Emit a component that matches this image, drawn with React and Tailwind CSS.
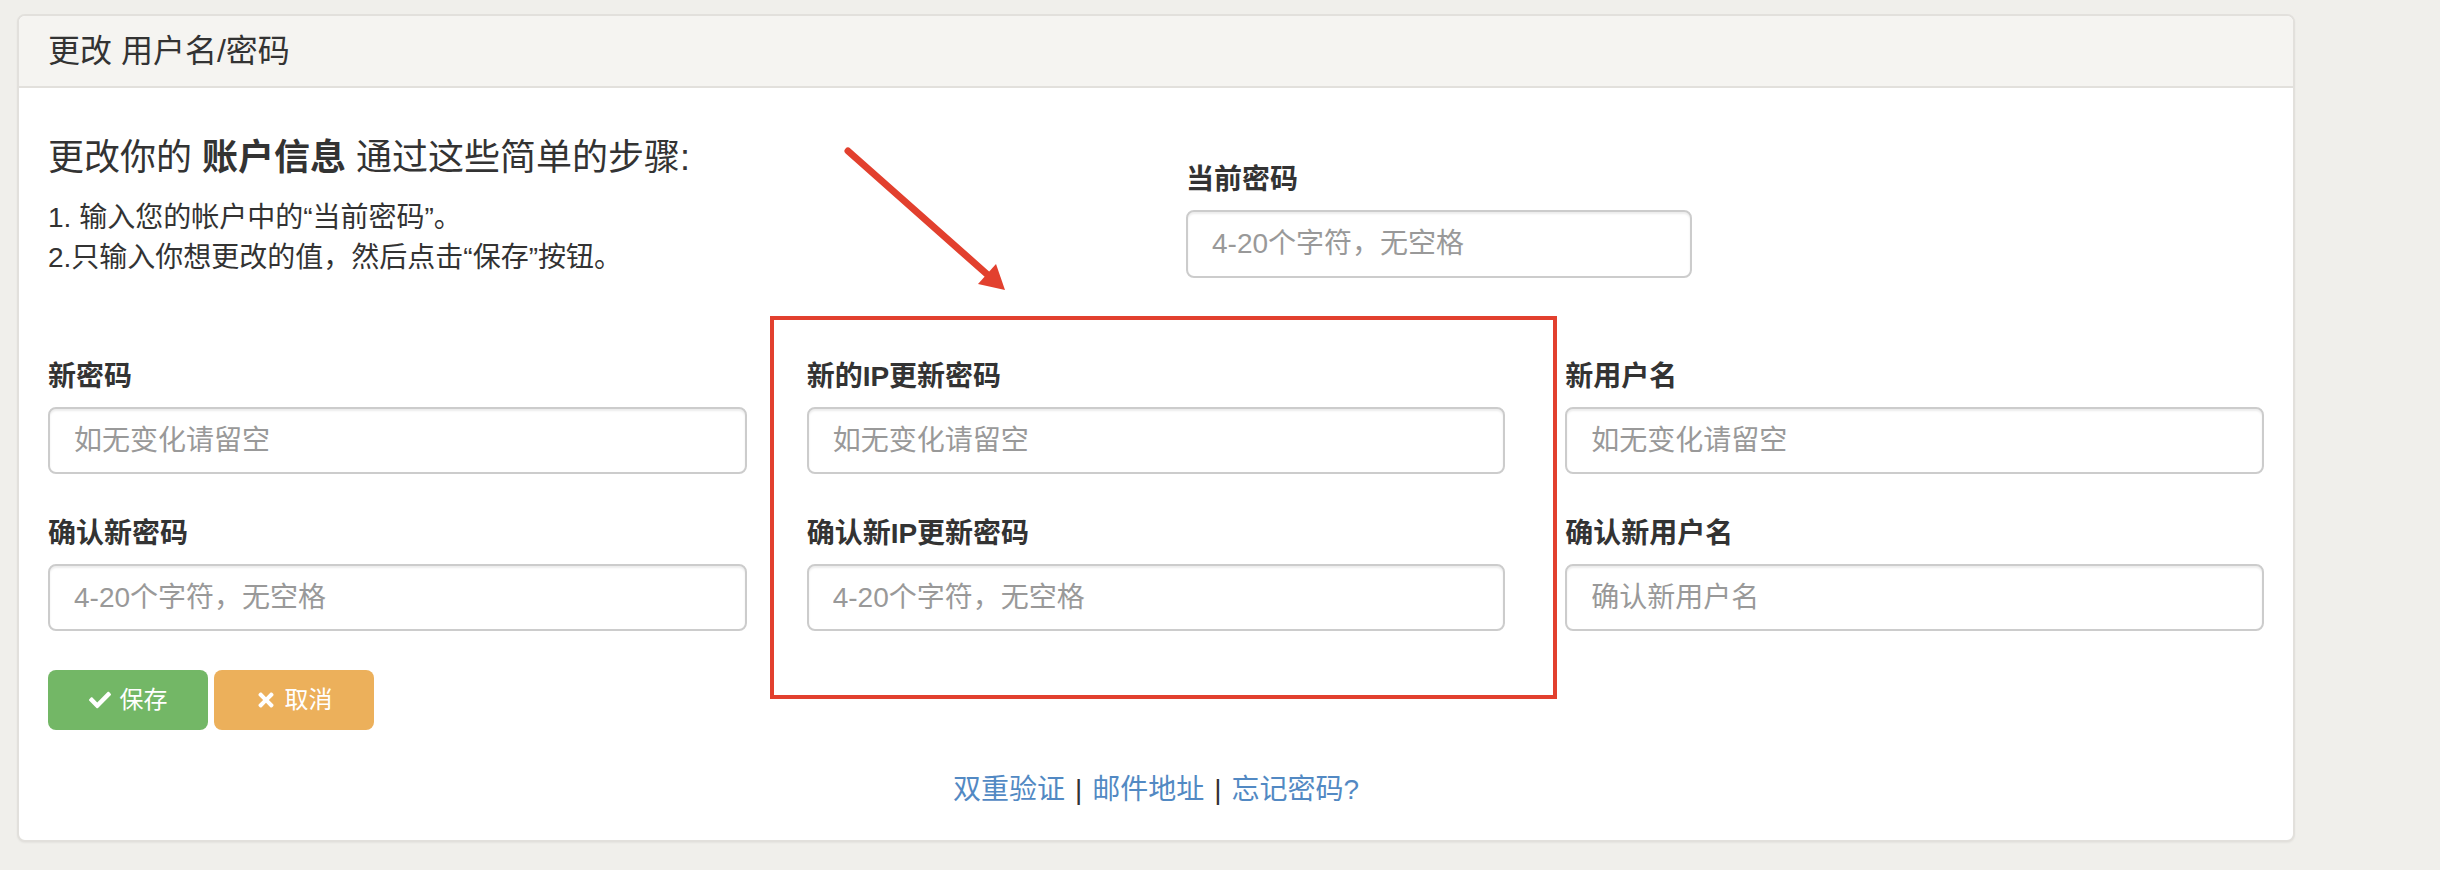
import React from "react";
import { FaCheck, FaTimes } from "react-icons/fa";

const FONT = "font-['Liberation_Sans','Noto_Sans_CJK_SC',sans-serif]";

function Field({ label, placeholder, className = "" }) {
  return (
    <div className={className}>
      <label className="block text-[28px] leading-[40px] font-bold text-[#333]">
        {label}
      </label>
      <input
        type="text"
        placeholder={placeholder}
        className="mt-[10px] block w-full h-[67px] px-[24px] text-[28px] text-[#555] bg-white border-2 border-[#cccccc] rounded-[8px] shadow-[inset_0_2px_2px_rgba(0,0,0,0.075)] placeholder:text-[#999] outline-none"
      />
    </div>
  );
}

export default function App() {
  return (
    <div className={`min-h-screen bg-[#f0efeb] pt-[14px] pl-[17px] ${FONT}`}>
      <div className="w-[2278px] bg-white border-2 border-[#e2e0dc] rounded-[8px] shadow-[0_1px_2px_rgba(0,0,0,0.05)]">
        {/* Heading */}
        <div className="h-[72px] flex items-center px-[29px] bg-[#f5f4f1] border-b-2 border-[#e2e0dc] rounded-t-[6px]">
          <h3 className="text-[32px] text-[#333]">更改 用户名/密码</h3>
        </div>

        {/* Body */}
        <div className="relative px-[29px] pt-[30px] pb-[30px] text-[#333]">
          <div className="grid grid-cols-2 gap-x-[60px]">
            <div>
              <h4 className="mt-[20px] mb-[20px] text-[36px] leading-[40px]">
                更改你的 <strong className="font-bold">账户信息</strong> 通过这些简单的步骤:
              </h4>
              <p className="text-[28px] leading-[40px]">1. 输入您的帐户中的“当前密码”。</p>
              <p className="text-[28px] leading-[40px]">2.只输入你想更改的值，然后点击“保存”按钮。</p>
            </div>
            <div className="pt-[42px]">
              <label className="block text-[28px] leading-[40px] font-bold">当前密码</label>
              <input
                type="password"
                placeholder="4-20个字符，无空格"
                className="mt-[10px] block w-[506px] h-[68px] px-[24px] text-[28px] bg-white border-2 border-[#cccccc] rounded-[8px] shadow-[inset_0_2px_2px_rgba(0,0,0,0.075)] placeholder:text-[#999] outline-none"
              />
            </div>
          </div>

          <div className="grid grid-cols-3 gap-x-[60px] mt-[79px]">
            <div>
              <Field label="新密码" placeholder="如无变化请留空" />
              <Field label="确认新密码" placeholder="4-20个字符，无空格" className="mt-[40px]" />
              <div className="flex gap-[6px] mt-[39px]">
                <button className="w-[160px] h-[60px] flex items-center justify-center gap-[9px] rounded-[8px] bg-[#73b766] text-white text-[24px]">
                  <FaCheck className="w-[22px] h-[22px]" />
                  保存
                </button>
                <button className="w-[160px] h-[60px] flex items-center justify-center gap-[9px] rounded-[8px] bg-[#ecb05b] text-white text-[24px]">
                  <FaTimes className="w-[20px] h-[22px]" />
                  取消
                </button>
              </div>
            </div>
            <div>
              <Field label="新的IP更新密码" placeholder="如无变化请留空" />
              <Field label="确认新IP更新密码" placeholder="4-20个字符，无空格" className="mt-[40px]" />
            </div>
            <div>
              <Field label="新用户名" placeholder="如无变化请留空" />
              <Field label="确认新用户名" placeholder="确认新用户名" className="mt-[40px]" />
            </div>
          </div>

          <div className="mt-[40px] text-center text-[28px] leading-[40px]">
            <a href="#" className="text-[#5289c3]">双重验证</a>
            <span className="text-[#333] mx-[10px]">|</span>
            <a href="#" className="text-[#5289c3]">邮件地址</a>
            <span className="text-[#333] mx-[10px]">|</span>
            <a href="#" className="text-[#5289c3]">忘记密码?</a>
          </div>

          {/* annotation: red box */}
          <div className="absolute left-[751px] top-[228px] w-[787px] h-[383px] border-4 border-[#e2402e] pointer-events-none" />

          {/* annotation: arrow */}
          <svg
            className="absolute left-[820px] top-[53px] pointer-events-none"
            width="180"
            height="160"
            viewBox="0 0 180 160"
          >
            <line x1="9" y1="10" x2="150" y2="135" stroke="#e2402e" strokeWidth="7" strokeLinecap="round" />
            <polygon points="166,149 139,143 157,123" fill="#e2402e" />
          </svg>
        </div>
      </div>
    </div>
  );
}
